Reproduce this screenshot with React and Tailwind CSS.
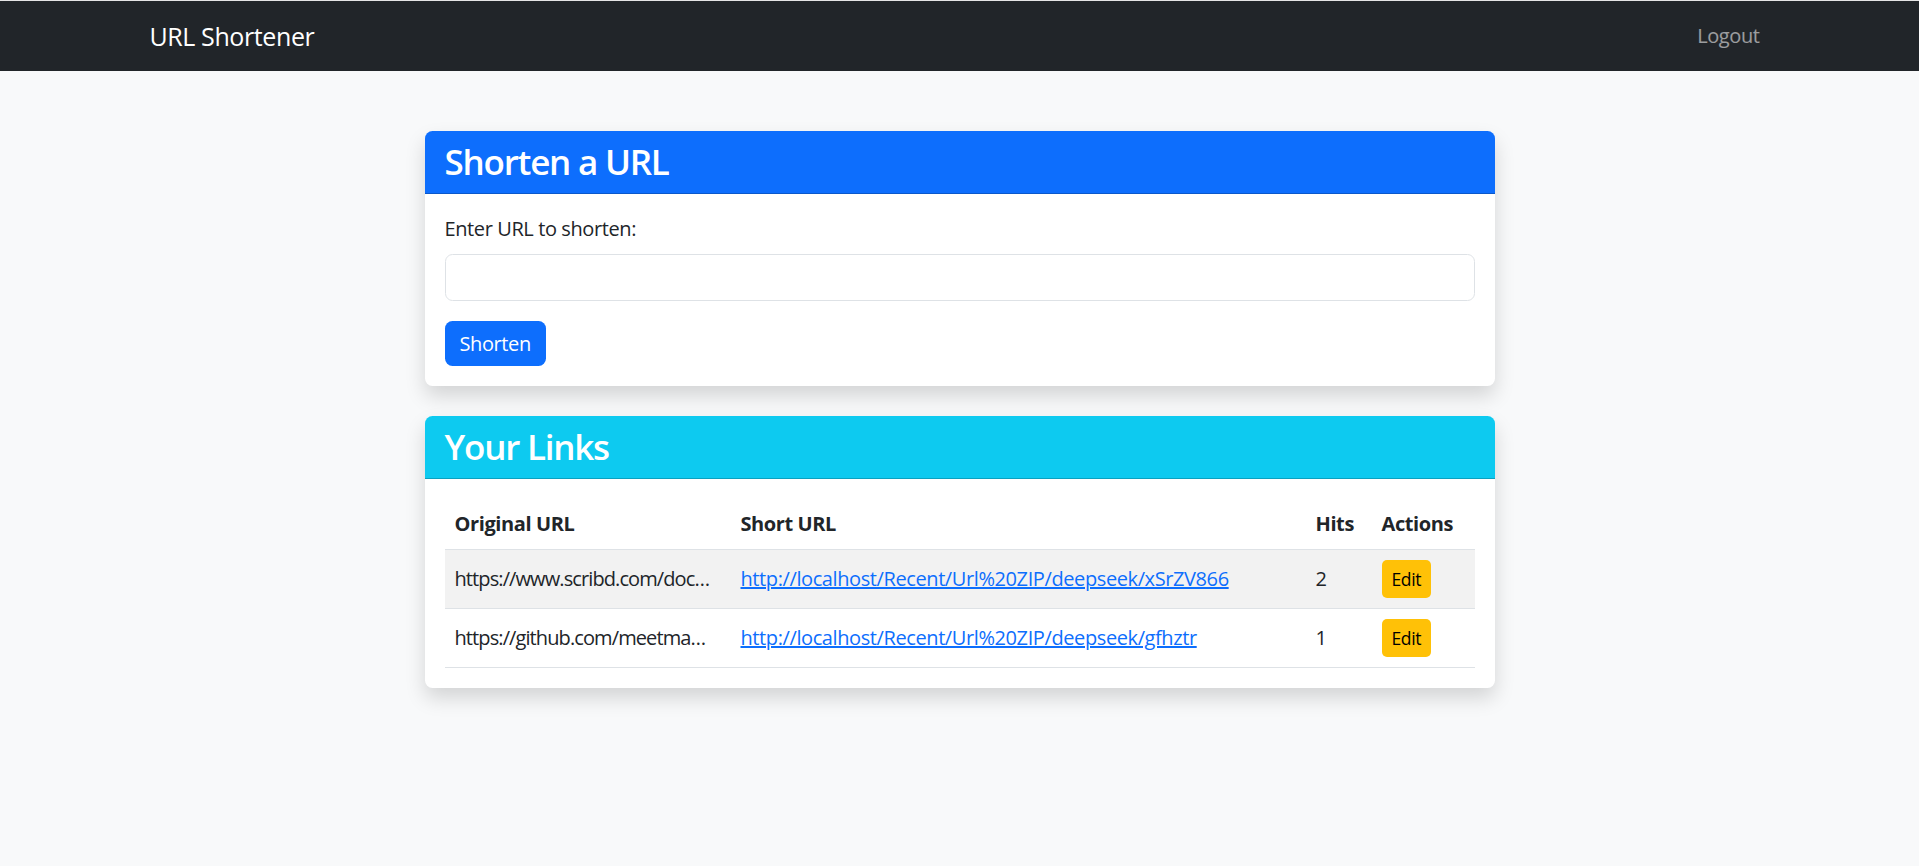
const links = [
  {
    original: 'https://www.scribd.com/doc…',
    short: 'http://localhost/Recent/Url%20ZIP/deepseek/xSrZV866',
    hits: 2,
  },
  {
    original: 'https://github.com/meetma…',
    short: 'http://localhost/Recent/Url%20ZIP/deepseek/gfhztr',
    hits: 1,
  },
];

export default function App() {
  return (
    <div
      className="min-h-screen bg-[#f8f9fa] tracking-[-0.025em] text-[#212529]"
      style={{ fontFamily: '"Segoe UI", "Open Sans", "Noto Sans", sans-serif' }}
    >
      {/* Navbar */}
      <div className="h-px bg-[#e5e5e5]" />
      <nav className="h-[70px] bg-[#212529]">
        <div className="mx-auto flex h-full w-[1650px] items-center justify-between px-[15px]">
          <a href="#" className="text-[25px] leading-[37px] text-white">
            URL Shortener
          </a>
          <a href="#" className="px-[10px] text-[20px] leading-[30px] text-white/55">
            Logout
          </a>
        </div>
      </nav>

      <main className="mx-auto w-[1070px] pt-[60px]">
        {/* Shorten card */}
        <div className="mb-[30px] overflow-hidden rounded-[7.5px] bg-white shadow-[0_10px_20px_rgba(0,0,0,0.15)]">
          <div className="border-b border-black/20 bg-[#0d6efd] px-5 py-[10px]">
            <h3 className="text-[35px] font-semibold leading-[42px] tracking-[-0.035em] text-white">Shorten a URL</h3>
          </div>
          <div className="p-5">
            <label className="mb-[10px] block text-[20px] leading-[30px]">Enter URL to shorten:</label>
            <input
              type="text"
              className="mb-5 block h-[47px] w-full rounded-[7.5px] border border-[#dee2e6] px-[15px] text-[20px] outline-none"
            />
            <button className="h-[45px] rounded-[7.5px] bg-[#0d6efd] px-[15px] text-[20px] text-white">
              Shorten
            </button>
          </div>
        </div>

        {/* Links card */}
        <div className="overflow-hidden rounded-[7.5px] bg-white shadow-[0_10px_20px_rgba(0,0,0,0.15)]">
          <div className="border-b border-black/20 bg-[#0dcaf0] px-5 py-[10px]">
            <h3 className="text-[35px] font-semibold leading-[42px] tracking-[-0.035em] text-white">Your Links</h3>
          </div>
          <div className="p-5">
            <table className="w-full table-fixed border-collapse text-left text-[20px] leading-[30px]">
              <colgroup>
                <col className="w-[286px]" />
                <col className="w-[575px]" />
                <col className="w-[66px]" />
                <col className="w-[103px]" />
              </colgroup>
              <thead>
                <tr className="border-b border-[#dee2e6]">
                  <th className="p-[10px] font-bold">Original URL</th>
                  <th className="p-[10px] font-bold">Short URL</th>
                  <th className="p-[10px] font-bold">Hits</th>
                  <th className="p-[10px] font-bold">Actions</th>
                </tr>
              </thead>
              <tbody>
                {links.map((link, i) => (
                  <tr
                    key={link.short}
                    className={`border-b border-[#dee2e6] ${i % 2 === 0 ? 'bg-[#f2f2f2]' : 'bg-white'}`}
                  >
                    <td className="whitespace-nowrap p-[10px] tracking-[-0.045em]">{link.original}</td>
                    <td className="p-[10px]">
                      <a href="#" className="text-[#0d6efd] underline">
                        {link.short}
                      </a>
                    </td>
                    <td className="p-[10px]">{link.hits}</td>
                    <td className="p-[10px]">
                      <button className="block h-[38px] rounded-[5px] bg-[#ffc107] px-[10px] text-[17.5px] text-black">
                        Edit
                      </button>
                    </td>
                  </tr>
                ))}
              </tbody>
            </table>
          </div>
        </div>
      </main>
    </div>
  );
}
